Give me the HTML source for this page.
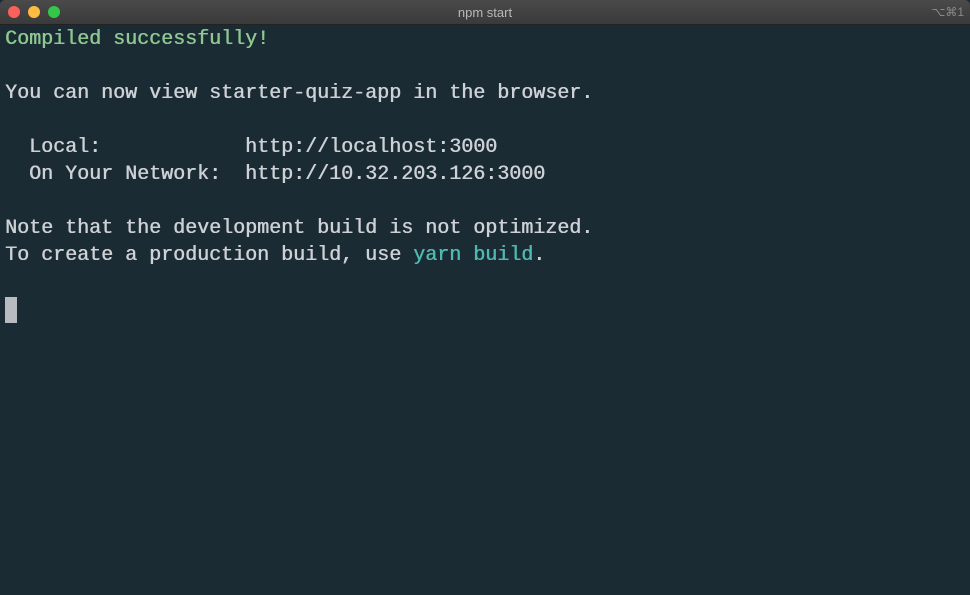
<!DOCTYPE html>
<html><head><style>
html,body{margin:0;padding:0;width:970px;height:595px;overflow:hidden;background:#1b2b33;}
.tb{position:absolute;left:0;top:0;width:970px;height:24px;background:linear-gradient(#4a4a4a,#3a3a3a);border-bottom:1px solid #222;border-radius:5px 5px 0 0;}
.dot{position:absolute;top:6px;width:12px;height:12px;border-radius:50%;}
.title{position:absolute;top:5px;left:0;width:970px;text-align:center;font:13px "Liberation Sans",sans-serif;color:#b8b8b8;}
.sc{position:absolute;top:5px;right:6px;font:12px "Liberation Sans","DejaVu Sans",sans-serif;color:#8a8a8a;}
pre{position:absolute;left:5px;top:26px;margin:0;font:20px/27px "Liberation Mono",monospace;color:#cdd1d5;text-shadow:0.5px 0 0 currentColor;}
.g{color:#8fc792;}
.c{color:#4fb8b0}
.cur{position:absolute;left:5px;top:297px;width:12px;height:26px;background:#b8bcc0;}
</style></head><body>
<div class="tb">
<div class="dot" style="left:8px;background:#fc605c"></div>
<div class="dot" style="left:28px;background:#fdbc40"></div>
<div class="dot" style="left:48px;background:#34c84a"></div>
<div class="title">npm start</div>
<div class="sc">⌥⌘1</div>
</div>
<pre><span class="g">Compiled successfully!</span>

You can now view starter-quiz-app in the browser.

  Local:            http://localhost:3000
  On Your Network:  http://10.32.203.126:3000

Note that the development build is not optimized.
To create a production build, use <span class="c">yarn build</span>.
</pre>
<div class="cur"></div>
</body></html>
